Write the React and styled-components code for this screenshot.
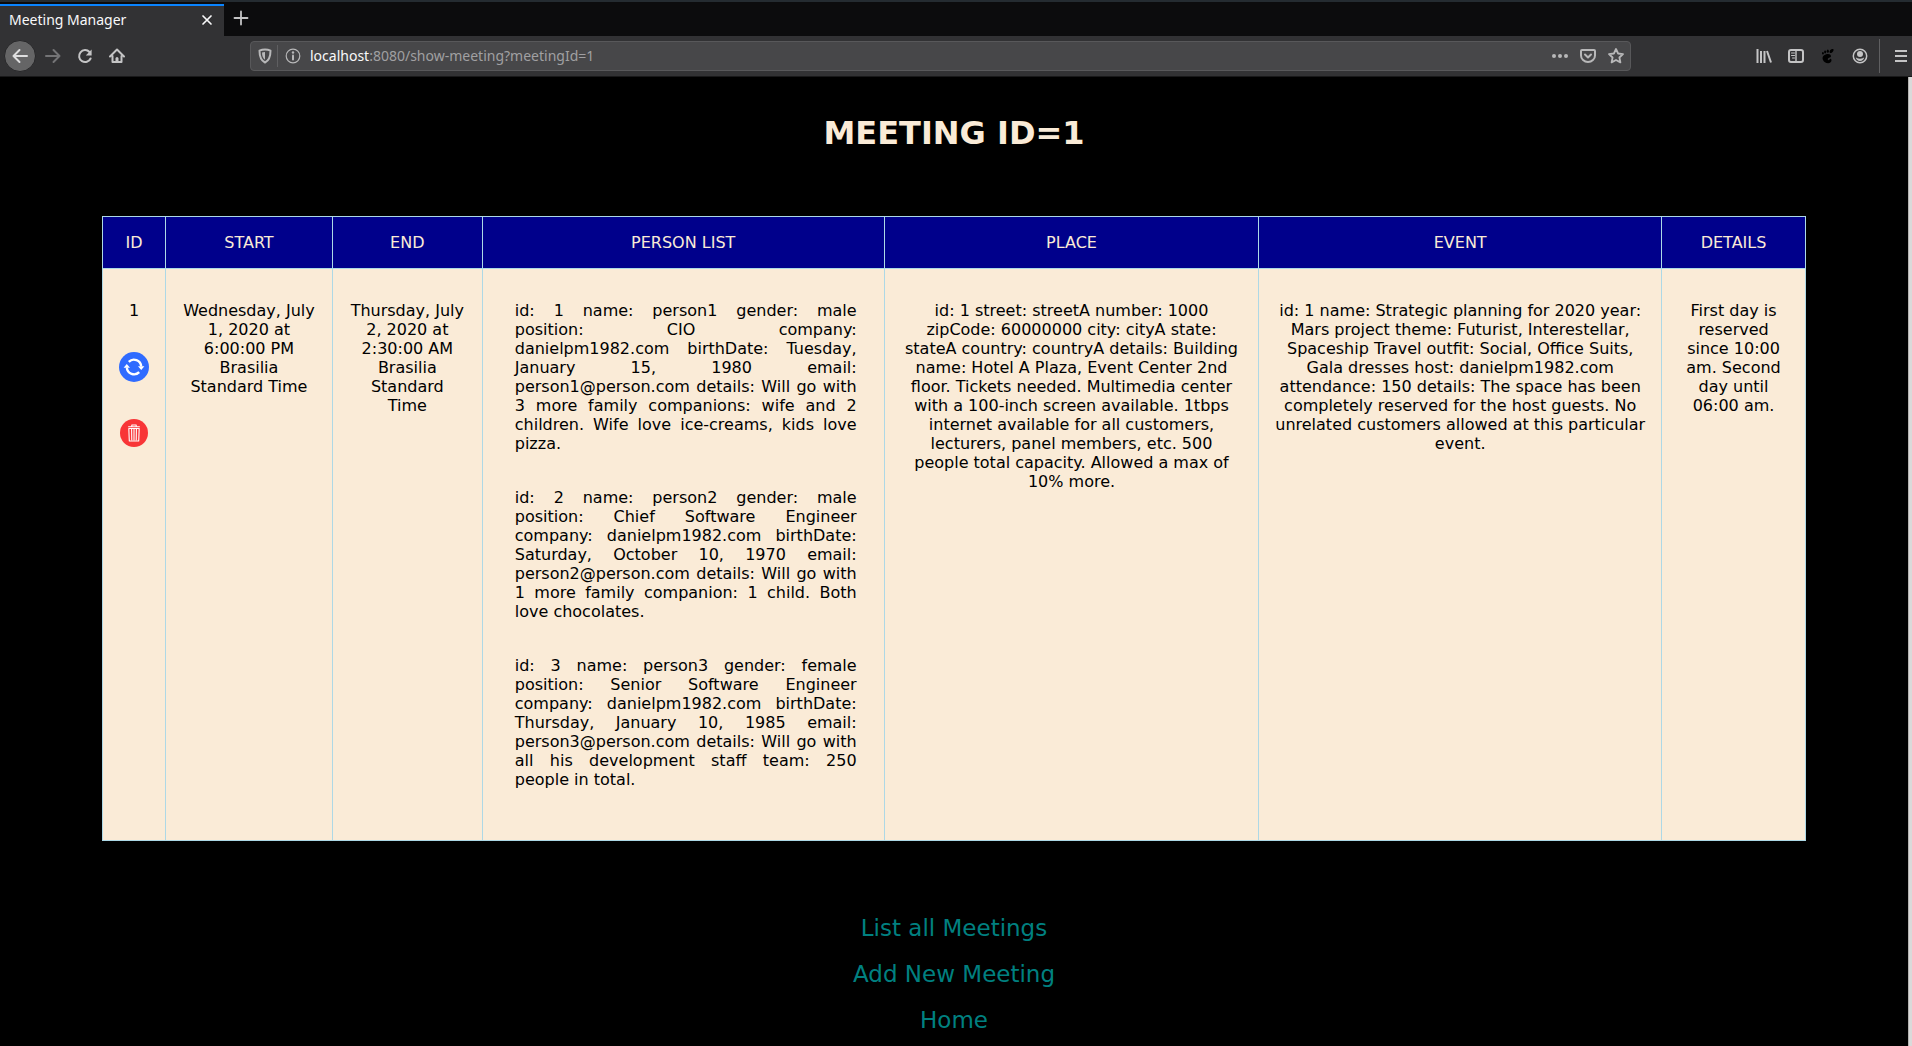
import React from "react";
import styled, { createGlobalStyle } from "styled-components";

const GlobalStyle = createGlobalStyle`
  * { box-sizing: border-box; }
  body { margin: 0; background: #000; }
`;

const Shell = styled.div`
  display: flex;
  flex-direction: column;
  height: 100vh;
  overflow: hidden;
  font-family: "DejaVu Sans", sans-serif;
`;

/* ---------- browser chrome ---------- */

const TabStrip = styled.header`
  display: flex;
  flex: none;
  gap: 1px;
  height: 36px;
  padding-top: 2px;
  background: linear-gradient(#252c31 2px, #0c0c0d 2px);
  font-family: "Noto Sans", sans-serif;
`;

const Tab = styled.div`
  display: flex;
  align-items: center;
  justify-content: space-between;
  width: 224px;
  margin-top: 2px;
  padding: 0 8px 2px 9px;
  border-top: 2px solid #0a84ff;
  background: #323234;
  color: #f9f9fa;
  font-size: 14px;
  line-height: 20px;
`;

const IconButton = styled.button`
  display: grid;
  place-items: center;
  flex: none;
  width: ${(p) => p.$size || 32}px;
  height: ${(p) => p.$size || 32}px;
  padding: 0 0 0 ${(p) => p.$indent || 0}px;
  border: ${(p) => (p.$round ? "1px solid #272729" : "0")};
  border-radius: ${(p) => (p.$round ? "50%" : "2px")};
  background: ${(p) => (p.$round ? "#656566" : "transparent")};
  color: ${(p) => p.$color || "#c4c4c5"};
`;

const Toolbar = styled.nav`
  display: flex;
  align-items: center;
  flex: none;
  height: 41px;
  padding: 0 0 1px 4px;
  border-bottom: 1px solid #19191a;
  background: #323234;
`;

const AddressBar = styled.div`
  display: flex;
  align-items: center;
  flex: 1;
  height: 30px;
  margin: 0 117px;
  padding: 0 0 0 2px;
  border: 1px solid #58585a;
  border-radius: 4px;
  background: #474749;
  font: 14px/20px "Noto Sans", sans-serif;
`;

const Divider = styled.span`
  flex: none;
  width: 1px;
  height: ${(p) => p.$height}px;
  background: #5f5f61;
`;

const AddressField = styled.div`
  display: grid;
  flex: 1;
  align-items: center;
  margin-left: 2px;
`;

const AddressText = styled.span`
  grid-area: 1 / 1;
  color: #a0a0a2;
  pointer-events: none;
  b { color: #f9f9fa; font-weight: 400; }
`;

const AddressInput = styled.input`
  grid-area: 1 / 1;
  width: 100%;
  padding: 0;
  border: 0;
  outline: 0;
  background: transparent;
  color: transparent;
  font: inherit;
`;

const ToolGroup = styled.div`
  display: flex;
  align-items: center;
  padding: 0 ${(p) => p.$end || 0}px 0 ${(p) => p.$start || 0}px;
`;

const Glyph = ({ size = 16, children }) => (
  <svg width={size} height={size} viewBox="0 0 16 16" fill="none" stroke="currentColor" strokeWidth="2" strokeLinecap="round" strokeLinejoin="round" aria-hidden="true">
    {children}
  </svg>
);

const CloseIcon = () => <Glyph><path d="M4 4l8 8M12 4l-8 8" strokeWidth="1.7" /></Glyph>;
const PlusIcon = () => <Glyph><path d="M8 1.500v13M1.500 8h13" strokeWidth="1.800" /></Glyph>;
const BackIcon = () => <Glyph><path d="M15 8H1.5M7.5 2l-6 6 6 6" /></Glyph>;
const ForwardIcon = () => <Glyph><path d="M1 8h13.5M8.500 2l6 6-6 6" /></Glyph>;
const ReloadIcon = () => (
  <Glyph>
    <path d="M13.600 10.500A6 6 0 1 1 12.500 4" />
    <path d="M14.600 1.600v5.800H8.800z" fill="currentColor" stroke="none" />
  </Glyph>
);
const HomeIcon = () => (
  <Glyph>
    <path d="M1 8.500L8 1.500l7 7M3.500 8v6h9V8" />
    <path d="M6.500 14v-3.500a1.500 1.500 0 0 1 3 0V14z" fill="currentColor" stroke="none" />
  </Glyph>
);
const ShieldIcon = () => (
  <Glyph>
    <path d="M8 1.500c2 0 3.800.4 5.500 1.200 0 5.800-1 9.500-5.500 11.800C3.500 12.200 2.500 8.500 2.500 2.700 4.200 1.900 6 1.500 8 1.500z" />
    <path d="M8 4c-1.300 0-2.200.2-3 .5.100 3.500.8 5.700 3 7.300z" fill="currentColor" stroke="none" />
  </Glyph>
);
const InfoIcon = () => (
  <Glyph>
    <circle cx="8" cy="8" r="6.800" strokeWidth="1.200" />
    <path d="M8 7.500v4" />
    <circle cx="8" cy="4.500" r="1.200" fill="currentColor" stroke="none" />
  </Glyph>
);
const DotsIcon = () => (
  <Glyph>
    <g fill="currentColor" stroke="none"><circle cx="2" cy="8" r="2" /><circle cx="8" cy="8" r="2" /><circle cx="14" cy="8" r="2" /></g>
  </Glyph>
);
const PocketIcon = () => (
  <Glyph>
    <path d="M2 2h12a1 1 0 0 1 1 1v4.500a7 6.500 0 0 1-14 0V3a1 1 0 0 1 1-1z" />
    <path d="M5 6.500l3 3 3-3" />
  </Glyph>
);
const StarIcon = () => (
  <Glyph><path d="M8 1l2.100 4.500 4.900.6-3.600 3.400 1 4.900L8 12l-4.400 2.400 1-4.900L1 6.100l4.900-.6z" strokeWidth="1.800" /></Glyph>
);
const LibraryIcon = () => (
  <Glyph><path d="M1.500 1v14M5 3v12M8.500 3v12M11 3l4 11.500" strokeLinecap="butt" /></Glyph>
);
const SidebarIcon = () => (
  <Glyph>
    <rect x="1" y="2" width="14" height="12" rx="2" />
    <path d="M8 2v12" strokeWidth="1.400" />
    <path d="M3.500 5h3M3.500 7.500h3M4.500 10h2" strokeWidth="1" />
  </Glyph>
);
const FootIcon = () => (
  <Glyph>
    <g fill="currentColor" stroke="none">
      <path d="M12.300 1C9.600 1.300 9 4.400 10.300 5c1.500.5 3.800-2.500 3.200-3.600-.2-.3-.6-.5-1.200-.4z" />
      <ellipse cx="7.800" cy="3.200" rx="1.100" ry="1.600" />
      <ellipse cx="5.100" cy="4" rx="1" ry="1.400" />
      <ellipse cx="2.900" cy="5.300" rx=".9" ry="1.200" />
      <path d="M11 8.200C11 6 8.500 5.600 6.200 6.200 3 7 2 9.500 2.900 11.800c.8 2.200 2.900 3.400 5.200 3.400 2 0 3.600-1.400 3.400-3.300-.2-1.300-1.600-1.400-2-.5-.2.700-.8 1-1.300.700-1-.700-.2-1.800.8-2.300 1-.5 2-.7 2-1.600z" />
    </g>
  </Glyph>
);
const AccountIcon = () => (
  <Glyph>
    <circle cx="8" cy="8" r="6.700" strokeWidth="1.500" />
    <circle cx="8" cy="6" r="3" fill="currentColor" stroke="none" />
    <path d="M3.800 9.500c.5 2 2 3.500 4.200 3.500s3.700-1.500 4.200-3.500c-1 .3-1.700 1.200-4.200 1.200S4.800 9.800 3.800 9.500z" fill="currentColor" stroke="none" />
  </Glyph>
);
const MenuIcon = () => <Glyph><path d="M2 3h12M2 8h12M2 13h12" strokeLinecap="butt" /></Glyph>;

/* ---------- page ---------- */

const Viewport = styled.div`
  display: flex;
  flex: 1;
  min-height: 0;
  overflow: hidden;
`;

const ScrollTrack = styled.div`
  flex: none;
  width: 4px;
  border-left: 1px solid #b4b2b0;
  background: #dadada;
`;

const Page = styled.main`
  flex: 1;
  min-width: 0;
  padding: 37px 102px 0;
  background: #000;
  text-align: center;
`;

const Title = styled.h1`
  margin: 0 0 64px;
  color: antiquewhite;
  font-size: 32px;
  line-height: 38px;
`;

const MeetingTable = styled.table`
  width: 100%;
  table-layout: fixed;
  border-collapse: collapse;
  font-size: 16px;
  line-height: 19px;
`;

const Col = styled.col`
  width: ${(p) => p.$share}%;
`;

const HeadCell = styled.th`
  padding: 16px 0;
  border: 1px solid lightblue;
  background: darkblue;
  color: antiquewhite;
  font-weight: 400;
`;

const Cell = styled.td`
  padding: 32px ${(p) => p.$pad || 16}px 16px;
  border: 1px solid lightblue;
  background: antiquewhite;
  color: #000;
  vertical-align: top;
`;

const People = styled.ul`
  margin: 0;
  padding: 0 11px 0 16px;
  list-style: none;
  text-align: justify;
`;

const Person = styled.li`
  margin-bottom: 35px;
`;

const Actions = styled.div`
  display: flex;
  flex-direction: column;
  align-items: center;
  gap: 36px;
  margin-top: 32px;
`;

const RoundAction = styled.button`
  display: block;
  width: 30px;
  height: 30px;
  padding: 0;
  border: 0;
  border-radius: 50%;
  background: transparent;
`;

const Links = styled.nav`
  display: flex;
  flex-direction: column;
  align-items: center;
  gap: 18px;
  margin-top: 73px;
`;

const PageLink = styled.a`
  color: teal;
  font-size: 23px;
  line-height: 28px;
  text-decoration: none;
`;

const UpdateIcon = () => (
  <svg width="30" height="30" viewBox="0 0 30 30" aria-hidden="true">
    <circle cx="15" cy="15" r="15" fill="#2f6bff" />
    <g fill="none" stroke="#fff" strokeWidth="2.400">
      <path d="M9.800 9.800A7.300 7.300 0 0 1 22.200 14.500" />
      <path d="M20.200 20.200A7.300 7.300 0 0 1 7.800 15.500" />
    </g>
    <path d="M19 14.300h6.400l-3.200 3.800zM4.600 15.700H11L7.800 11.900z" fill="#fff" />
  </svg>
);

const DeleteIcon = () => (
  <svg width="30" height="30" viewBox="0 0 30 30" aria-hidden="true">
    <circle cx="15" cy="15" r="14" fill="#f83537" />
    <g fill="none" stroke="#fff" strokeWidth="1.100" strokeLinejoin="round">
      <path d="M9.200 8.800h11.600M12.800 8.500V7h4.400v1.500M9.800 10.500l.5 12.500h9.400l.5-12.500z" />
      <path d="M12.600 11l.2 11.500M15 11v11.500M17.400 11l-.2 11.500" />
    </g>
  </svg>
);

const columns = [
  { name: "ID", share: 3.7 },
  { name: "START", share: 9.8 },
  { name: "END", share: 8.8 },
  { name: "PERSON LIST", share: 23.6 },
  { name: "PLACE", share: 22 },
  { name: "EVENT", share: 23.65 },
  { name: "DETAILS", share: 8.45 },
];

const people = [
  "id: 1 name: person1 gender: male position: CIO company: danielpm1982.com birthDate: Tuesday, January 15, 1980 email: person1@person.com details: Will go with 3 more family companions: wife and 2 children. Wife love ice-creams, kids love pizza.",
  "id: 2 name: person2 gender: male position: Chief Software Engineer company: danielpm1982.com birthDate: Saturday, October 10, 1970 email: person2@person.com details: Will go with 1 more family companion: 1 child. Both love chocolates.",
  "id: 3 name: person3 gender: female position: Senior Software Engineer company: danielpm1982.com birthDate: Thursday, January 10, 1985 email: person3@person.com details: Will go with all his development staff team: 250 people in total.",
];

const links = ["List all Meetings", "Add New Meeting", "Home"];

function BrowserChrome() {
  return (
    <>
      <TabStrip>
        <Tab>
          Meeting Manager
          <IconButton $size={18} $color="#f9f9fa" aria-label="Close tab"><CloseIcon /></IconButton>
        </Tab>
        <IconButton aria-label="New tab"><PlusIcon /></IconButton>
      </TabStrip>
      <Toolbar>
        <IconButton $round $color="#dededf" aria-label="Back"><BackIcon /></IconButton>
        <ToolGroup $start={1}>
          <IconButton $color="#747476" aria-label="Forward"><ForwardIcon /></IconButton>
          <IconButton aria-label="Reload"><ReloadIcon /></IconButton>
          <IconButton aria-label="Home"><HomeIcon /></IconButton>
        </ToolGroup>
        <AddressBar>
          <IconButton $size={24} $color="#b8b8b9" aria-label="Tracking protection"><ShieldIcon /></IconButton>
          <Divider $height={22} />
          <IconButton $size={30} $color="#b8b8b9" aria-label="Site information"><InfoIcon /></IconButton>
          <AddressField>
            <AddressInput aria-label="Address" />
            <AddressText><b>localhost</b>:8080/show-meeting?meetingId=1</AddressText>
          </AddressField>
          <IconButton $size={28} $color="#b8b8b9" aria-label="Page actions"><DotsIcon /></IconButton>
          <IconButton $size={28} $color="#b8b8b9" aria-label="Save to Pocket"><PocketIcon /></IconButton>
          <IconButton $size={28} $color="#b8b8b9" aria-label="Bookmark"><StarIcon /></IconButton>
        </AddressBar>
        <ToolGroup $end={3}>
          <IconButton aria-label="Library"><LibraryIcon /></IconButton>
          <IconButton aria-label="Sidebars"><SidebarIcon /></IconButton>
          <IconButton $color="#000" aria-label="GNOME Shell integration"><FootIcon /></IconButton>
          <IconButton aria-label="Account"><AccountIcon /></IconButton>
        </ToolGroup>
        <Divider $height={34} />
        <IconButton $indent={10} aria-label="Menu"><MenuIcon /></IconButton>
      </Toolbar>
    </>
  );
}

export default function App() {
  return (
    <Shell>
      <GlobalStyle />
      <BrowserChrome />
      <Viewport>
        <Page>
          <Title>MEETING ID=1</Title>
          <MeetingTable>
            <colgroup>
              {columns.map((c) => <Col key={c.name} $share={c.share} />)}
            </colgroup>
            <thead>
              <tr>{columns.map((c) => <HeadCell key={c.name} scope="col">{c.name}</HeadCell>)}</tr>
            </thead>
            <tbody>
              <tr>
                <Cell>
                  1
                  <Actions>
                    <RoundAction aria-label="Update meeting"><UpdateIcon /></RoundAction>
                    <RoundAction aria-label="Delete meeting"><DeleteIcon /></RoundAction>
                  </Actions>
                </Cell>
                <Cell>Wednesday, July 1, 2020 at 6:00:00 PM Brasilia Standard Time</Cell>
                <Cell>Thursday, July 2, 2020 at 2:30:00 AM Brasilia Standard Time</Cell>
                <Cell>
                  <People>{people.map((p) => <Person key={p}>{p}</Person>)}</People>
                </Cell>
                <Cell $pad={18}>id: 1 street: streetA number: 1000 zipCode: 60000000 city: cityA state: stateA country: countryA details: Building name: Hotel A Plaza, Event Center 2nd floor. Tickets needed. Multimedia center with a 100-inch screen available. 1tbps internet available for all customers, lecturers, panel members, etc. 500 people total capacity. Allowed a max of 10% more.</Cell>
                <Cell $pad={15}>id: 1 name: Strategic planning for 2020 year: Mars project theme: Futurist, Interestellar, Spaceship Travel outfit: Social, Office Suits, Gala dresses host: danielpm1982.com attendance: 150 details: The space has been completely reserved for the host guests. No unrelated customers allowed at this particular event.</Cell>
                <Cell>First day is reserved since 10:00 am. Second day until 06:00 am.</Cell>
              </tr>
            </tbody>
          </MeetingTable>
          <Links>
            {links.map((l) => <PageLink key={l} href="#">{l}</PageLink>)}
          </Links>
        </Page>
        <ScrollTrack />
      </Viewport>
    </Shell>
  );
}
